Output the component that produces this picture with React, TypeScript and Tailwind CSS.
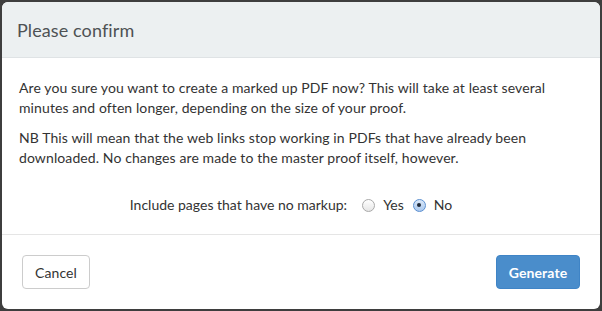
import React from "react";

function Radio({ checked }: { checked?: boolean }) {
  return checked ? (
    <span className="flex h-[13px] w-[13px] items-center justify-center rounded-full border border-[#5b8fd0] bg-gradient-to-b from-[#dbe8f8] to-[#a9c8ee]">
      <span className="block h-[4px] w-[4px] rounded-full bg-[#1f2a3a]" />
    </span>
  ) : (
    <span className="block h-[13px] w-[13px] rounded-full border border-[#a9a9a9] bg-gradient-to-b from-[#ffffff] to-[#e6e6e6]" />
  );
}

export default function App() {
  return (
    <div
      className="h-[311px] w-[602px] bg-[#3e3e3e] p-[2px]"
      style={{ fontFamily: "Lato, 'Open Sans', sans-serif" }}
    >
      <div className="flex h-[307px] w-[598px] flex-col overflow-hidden rounded-[6px] bg-white text-[#333333]">
        <div className="h-[56px] border-b border-[#dfe3e5] bg-[#ecf0f1] px-[15px] py-[15px]">
          <h4 className="text-[18px] leading-[26px] tracking-[0.1px] text-[#4e5254]">Please confirm</h4>
        </div>
        <div className="h-[176px] px-[17px] pt-[20px] text-[14px] leading-[20px] tracking-[0.1px]">
          <p className="mb-[10px]">
            Are you sure you want to create a marked up PDF now? This will take at least several minutes and often longer, depending on the size of your proof.
          </p>
          <p className="mb-[10px]">
            NB This will mean that the web links stop working in PDFs that have already been downloaded. No changes are made to the master proof itself, however.
          </p>
          <div className="mt-[27px] flex h-[20px] items-center justify-center pr-[20px] tracking-normal">
            <span>Include pages that have no markup:</span>
            <span className="ml-[15px] block"><Radio /></span>
            <span className="ml-[8px]">Yes</span>
            <span className="ml-[9px] block"><Radio checked /></span>
            <span className="ml-[8px]">No</span>
          </div>
        </div>
        <div className="flex flex-1 items-start justify-between border-t border-[#e5e5e5] px-[20px] pt-[20px]">
          <button className="h-[34px] w-[68px] rounded-[4px] border border-[#cccccc] bg-white text-[14px] tracking-[0.1px] text-[#333333]">
            Cancel
          </button>
          <button className="h-[34px] w-[84px] rounded-[4px] border border-[#3f84c6] bg-[#4a8dcb] text-[14px] font-bold tracking-[0.1px] text-white">
            Generate
          </button>
        </div>
      </div>
    </div>
  );
}
